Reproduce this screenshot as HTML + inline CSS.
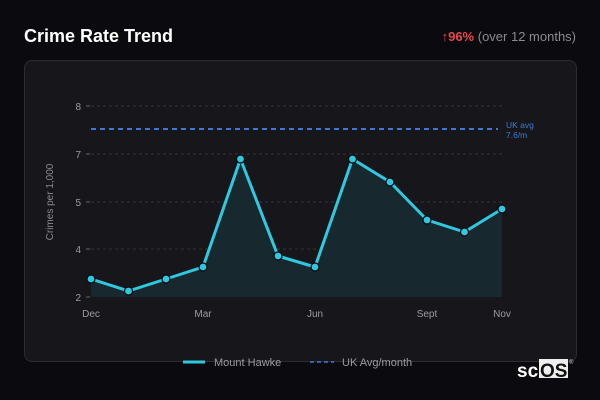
<!DOCTYPE html>
<html><head><style>
body{margin:0;width:600px;height:400px;background:#0b0b0f;font-family:"Liberation Sans",sans-serif;overflow:hidden;position:relative}
.t{position:absolute;left:24px;top:26px;color:#fff;font-weight:bold;font-size:18px}
.r{position:absolute;right:24px;top:29px;font-size:13px;color:#8a8a90}
.r b{color:#e5484d}
.card{position:absolute;left:24px;top:60px;width:551px;height:300px;background:#17171b;border:1px solid #2c2c31;border-radius:8px}
</style></head><body>
<div class="t">Crime Rate Trend</div>
<div class="r"><b style="font-weight:normal">↑</b><b>96%</b> (over 12 months)</div>
<div class="card"></div>
<svg width="600" height="400" style="position:absolute;left:0;top:0" font-family="Liberation Sans, sans-serif">
<g stroke="#333338" stroke-dasharray="3,3" stroke-width="1">
<line x1="91" y1="106" x2="502" y2="106"/><line x1="91" y1="154" x2="502" y2="154"/><line x1="91" y1="202" x2="502" y2="202"/><line x1="91" y1="249" x2="502" y2="249"/>
</g>
<g stroke="#666" stroke-width="1"><line x1="86" y1="106" x2="90" y2="106"/><line x1="86" y1="154" x2="90" y2="154"/><line x1="86" y1="202" x2="90" y2="202"/><line x1="86" y1="249" x2="90" y2="249"/><line x1="86" y1="297" x2="90" y2="297"/></g>
<g fill="#9a9aa0" font-size="10" text-anchor="end"><text x="81" y="110">8</text><text x="81" y="158">7</text><text x="81" y="206">5</text><text x="81" y="253">4</text><text x="81" y="301">2</text></g>
<text transform="translate(53,202) rotate(-90)" fill="#8a8a90" font-size="10" text-anchor="middle">Crimes per 1,000</text>
<line x1="91" y1="129" x2="498" y2="129" stroke="#3f78d8" stroke-width="2" stroke-dasharray="5,4"/>
<text x="506" y="128" fill="#3f78d8" font-size="8.5">UK avg</text><text x="506" y="138" fill="#3f78d8" font-size="8.5">7.6/m</text>
<polygon fill="#17292e" points="91,279 128.5,291 166,279 203,267 240.5,159 278,256 315,267 352.5,159 390,182 427,220 464.5,232 502,209 502,297 91,297"/>
<polyline fill="none" stroke="#2fc8df" stroke-width="3" stroke-linejoin="round" points="91,279 128.5,291 166,279 203,267 240.5,159 278,256 315,267 352.5,159 390,182 427,220 464.5,232 502,209"/>
<g fill="#2fc8df" stroke="#0b0b0f" stroke-width="1.2">
<circle cx="91" cy="279" r="4"/><circle cx="128.5" cy="291" r="4"/><circle cx="166" cy="279" r="4"/><circle cx="203" cy="267" r="4"/><circle cx="240.5" cy="159" r="4"/><circle cx="278" cy="256" r="4"/><circle cx="315" cy="267" r="4"/><circle cx="352.5" cy="159" r="4"/><circle cx="390" cy="182" r="4"/><circle cx="427" cy="220" r="4"/><circle cx="464.5" cy="232" r="4"/><circle cx="502" cy="209" r="4"/>
</g>
<g fill="#9a9aa0" font-size="10" text-anchor="middle"><text x="91" y="317">Dec</text><text x="203" y="317">Mar</text><text x="315" y="317">Jun</text><text x="427" y="317">Sept</text><text x="502" y="317">Nov</text></g>
<line x1="183" y1="362" x2="205" y2="362" stroke="#2fc8df" stroke-width="3"/>
<text x="214" y="366" fill="#9a9aa0" font-size="11">Mount Hawke</text>
<line x1="310" y1="362" x2="334" y2="362" stroke="#3f78d8" stroke-width="1.5" stroke-dasharray="4,3"/>
<text x="342" y="366" fill="#9a9aa0" font-size="11">UK Avg/month</text>
<text x="517" y="377" fill="#fff" font-size="19" font-weight="bold">sc</text>
<rect x="539" y="359" width="29" height="19" fill="#eee"/>
<text x="540" y="377" fill="#111" font-size="19" font-weight="bold">OS</text>
<text x="569" y="364" fill="#ccc" font-size="6">®</text>
</svg>
</body></html>
